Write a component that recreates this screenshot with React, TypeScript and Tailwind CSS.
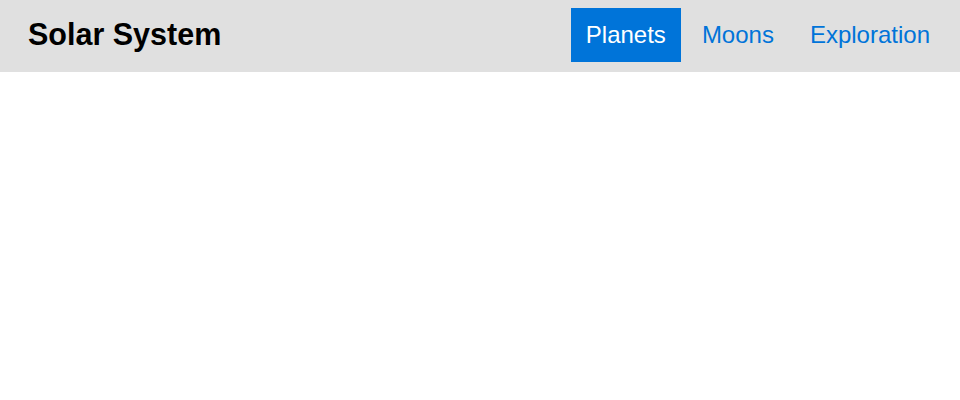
import React from 'react';

const links = [
  { label: 'Planets', active: true },
  { label: 'Moons', active: false },
  { label: 'Exploration', active: false },
];

const App: React.FC = () => {
  return (
    <div className="min-h-[400px] bg-white font-['Liberation_Sans',Arial,sans-serif]">
      <header className="h-[72px] bg-[#e0e0e0] flex items-center justify-between pl-7 pr-[15px] pt-2 pb-2.5">
        <h1 className="text-[30.5px] leading-8 font-bold text-black mb-0.5">Solar System</h1>
        <nav className="flex items-center gap-1.5">
          {links.map((link) => (
            <a
              key={link.label}
              href="#"
              className={
                link.active
                  ? 'px-[15px] py-[15px] text-[24px] leading-6 bg-[#0074d9] text-white'
                  : 'px-[15px] py-[15px] text-[24px] leading-6 text-[#0074d9]'
              }
            >
              {link.label}
            </a>
          ))}
        </nav>
      </header>
    </div>
  );
};

export default App;
